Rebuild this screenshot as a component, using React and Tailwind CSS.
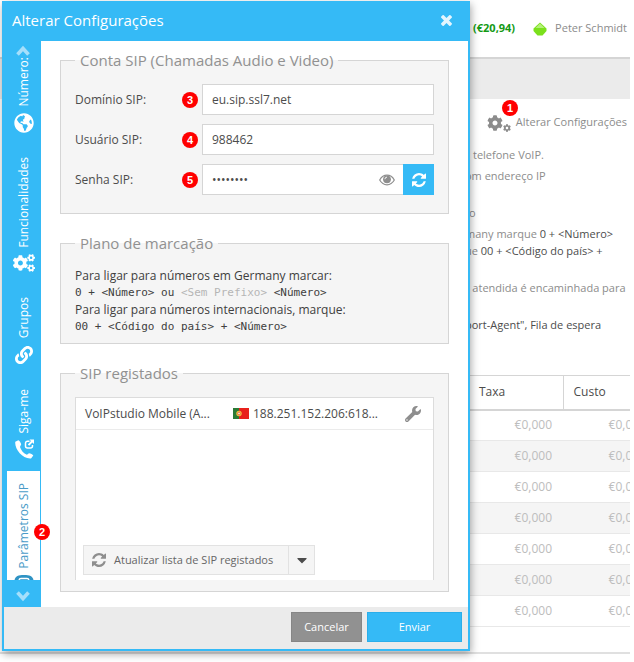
import { FaCogs, FaCog, FaLink, FaWrench, FaGlobeAmericas, FaCaretDown } from 'react-icons/fa';

const RefreshIcon = ({ className }) => (
    <svg viewBox="0 0 1536 1536" fill="currentColor" className={className} aria-hidden="true">
        <path d="M1511 928q0 5-1 7-64 268-268 434.500t-478 166.500q-146 0-282.500-55t-243.500-157l-129 129q-19 19-45 19t-45-19-19-45v-448q0-26 19-45t45-19h448q26 0 45 19t19 45-19 45l-137 137q71 66 161 102t187 36q134 0 250-65t186-179q11-17 53-117 8-23 30-23h192q13 0 22.500 9.500t9.500 22.500zM1536 128v448q0 26-19 45t-45 19h-448q-26 0-45-19t-19-45 19-45l138-138q-148-137-349-137-134 0-250 65t-186 179q-11 17-53 117-8 23-30 23h-199q-13 0-22.500-9.500t-9.500-22.500v-7q65-268 270-434.500t480-166.500q146 0 284 55.500t245 156.500l130-129q19-19 45-19t45 19 19 45z" />
    </svg>
);

const CloseIcon = ({ className }) => (
    <svg viewBox="110 366 1188 1188" fill="currentColor" className={className} aria-hidden="true">
        <path d="M1298 1322q0 40-28 68l-136 136q-28 28-68 28t-68-28l-294-294-294 294q-28 28-68 28t-68-28l-136-136q-28-28-28-68t28-68l294-294-294-294q-28-28-28-68t28-68l136-136q28-28 68-28t68 28l294 294 294-294q28-28 68-28t68 28l136 136q28 28 28 68t-28 68l-294 294 294 294q28 28 28 68z" />
    </svg>
);

const EyeIcon = ({ className }) => (
    <svg viewBox="0 0 16 12" className={className} aria-hidden="true">
        <path d="M0.700 6C2.400 3 5 1.200 8 1.200S13.600 3 15.300 6C13.600 9 11 10.800 8 10.800S2.400 9 0.700 6Z" fill="none" stroke="currentColor" strokeWidth="1.200" />
        <circle cx="8" cy="5.300" r="3.900" fill="currentColor" />
        <path d="M5.900 5.200A2.200 2.200 0 0 1 8 3.100" fill="none" stroke="white" strokeWidth="0.900" />
    </svg>
);

const Chevron = ({ up }) => (
    <svg viewBox="0 0 16 12" className="w-4 h-3" aria-hidden="true">
        <path d={up ? 'M2.500 9.500L8 3.500l5.500 6' : 'M2.500 2.500L8 8.500l5.500-6'} fill="none" stroke="#a5dffb" strokeWidth="3.600" />
    </svg>
);

const ForwardIcon = () => (
    <svg viewBox="0 0 20 20" className="w-5 h-5" aria-hidden="true">
        <path d="M4.300 1.200L1.300 2.800C0.300 9.800 8.500 20.200 17 19.400L19.300 16.600C18.800 15.400 16.500 14.400 15 14.300L12.900 15.800C9.700 14.500 6.900 11 6 7.900L7.200 5.300C6.700 3.600 5.500 1.300 4.300 1.200Z" fill="currentColor" />
        <path d="M15.500 2.200H13.500A2 2 0 0 0 11.500 4.200V7A2 2 0 0 0 13.500 9H16.500A2 2 0 0 0 18.500 7V6" fill="none" stroke="currentColor" strokeWidth="1.500" />
        <path d="M15.500 0.500H20V5L18.400 3.500 15.200 6.800 13.800 5.400 17 2.100Z" fill="currentColor" />
    </svg>
);

const SipIcon = () => (
    <svg viewBox="0 0 20 20" className="w-5 h-5" aria-hidden="true">
        <path d="M0.500 6C0.500 1.500 4 0 10 0S19.500 1.500 19.500 6V13C19.500 18 16 19.500 10 19.500S0.500 18 0.500 13Z" fill="#2f93c4" />
        <rect x="5" y="3.500" width="10" height="13" rx="2" fill="none" stroke="white" strokeWidth="1.300" />
    </svg>
);

const Flag = () => (
    <svg viewBox="0 0 16 11" className="w-4 h-[11px] shrink-0" role="img" aria-label="Portugal">
        <rect width="16" height="11" fill="#e8211c" />
        <rect width="6" height="11" fill="#2c7a35" />
        <circle cx="6" cy="5.500" r="2.700" fill="#f3c53c" />
        <circle cx="6" cy="5.500" r="1.400" fill="#f6e3d8" stroke="#dd4a2a" strokeWidth="0.700" />
    </svg>
);

const Badge = ({ children, className = '' }) => (
    <span className={`flex w-4 h-4 shrink-0 items-center justify-center rounded-full bg-[#ff0000] font-['Liberation_Sans',sans-serif] text-[11px] leading-4 font-bold text-white ${className}`}>
        {children}
    </span>
);

const tabs = [
    { label: 'Número:', icon: <FaGlobeAmericas className="w-5 h-5" /> },
    { label: 'Funcionalidades', icon: <FaCogs className="w-[22px] h-5" /> },
    { label: 'Grupos', icon: <FaLink className="w-5 h-5 p-px" /> },
    { label: 'Siga-me', icon: <ForwardIcon /> },
    { label: 'Parâmetros SIP', icon: <SipIcon />, active: true },
];

const Group = ({ title, children, className = '' }) => (
    <fieldset className={`min-w-0 border border-[#d5d5d5] bg-[#f5f5f5] px-[14px] ${className}`}>
        <legend className="px-[5px] text-[15px] leading-6 text-[#919191]">{title}</legend>
        {children}
    </fieldset>
);

const Field = ({ id, label, step, children }) => (
    <div className="flex h-[31px] items-center">
        <label htmlFor={id} className="w-[107px] shrink-0">{label}</label>
        <Badge className="mr-1">{step}</Badge>
        {children}
    </div>
);

const Tabs = () => (
    <nav className="relative flex w-[37px] shrink-0 flex-col bg-[#35baf6]">
        <button aria-label="Anterior" className="flex h-4 shrink-0 items-end justify-center pl-px">
            <Chevron up />
        </button>
        <div className="flex h-0 grow flex-col overflow-hidden pl-[3px]">
            {tabs.map((tab, i) => (
                <button
                    key={tab.label}
                    className={`flex shrink-0 flex-col items-center gap-[6px] pb-3 text-[12px] leading-5 ${i === 0 ? '' : 'pt-3'} ${
                        tab.active ? 'mr-px bg-white text-[#4a9bc8]' : 'text-white'
                    }`}
                >
                    <span className="rotate-180 [writing-mode:vertical-rl]">{tab.label}</span>
                    {tab.icon}
                </button>
            ))}
        </div>
        <button aria-label="Seguinte" className="flex h-[27px] shrink-0 items-center justify-center pt-1 pl-px">
            <Chevron />
        </button>
        <Badge className="absolute top-[483px] -right-[9px]">2</Badge>
    </nav>
);

const SettingsDialog = () => (
    <div role="dialog" aria-label="Alterar Configurações" className="absolute top-px left-[2px] w-[468px] border-2 border-[#35baf6] bg-white text-[12px] text-[#4c4c4c] shadow-[1px_3px_8px_rgba(0,0,0,0.35)]">
        <header className="flex h-[38px] items-center justify-between bg-[#35baf6] pr-4 pb-1 pl-2">
            <h2 className="text-[15px] leading-6 text-white">Alterar Configurações</h2>
            <button aria-label="Fechar" className="text-[#e3f5fe]">
                <CloseIcon className="w-[11px] h-[11px]" />
            </button>
        </header>
        <div className="flex">
            <Tabs />
            <form className="flex min-w-0 grow flex-col gap-[17px] px-[19px] pt-[7px] pb-[15px]">
                <Group title="Conta SIP (Chamadas Audio e Video)" className="pt-3 pb-[18px]">
                    <div className="flex flex-col gap-[9px]">
                        <Field id="domain" label="Domínio SIP:" step="3">
                            <input id="domain" defaultValue="eu.sip.ssl7.net" className="h-[31px] min-w-0 grow border border-[#d5d5d5] bg-white px-[9px]" />
                        </Field>
                        <Field id="user" label="Usuário SIP:" step="4">
                            <input id="user" defaultValue="988462" className="h-[31px] min-w-0 grow border border-[#d5d5d5] bg-white px-[9px]" />
                        </Field>
                        <Field id="password" label="Senha SIP:" step="5">
                            <div className="flex h-[31px] min-w-0 grow items-center border border-r-0 border-[#d5d5d5] bg-white">
                                <input id="password" type="password" defaultValue="98846201" className="w-0 grow px-[9px]" />
                                <button type="button" aria-label="Mostrar senha" className="mr-2 shrink-0 text-[#8e8e8e]">
                                    <EyeIcon className="w-4 h-3" />
                                </button>
                            </div>
                            <button type="button" aria-label="Gerar senha" className="flex h-[31px] w-[31px] shrink-0 items-center justify-center bg-[#35baf6] text-white">
                                <RefreshIcon className="w-[14px] h-[14px]" />
                            </button>
                        </Field>
                    </div>
                </Group>
                <Group title="Plano de marcação" className="pt-3 pb-2">
                    <div className="leading-[17px] text-[#404040]">
                        <p>Para ligar para números em Germany marcar:</p>
                        <p className="font-['DejaVu_Sans_Mono',monospace] text-[11px]">
                            0 + &lt;Número&gt; ou <span className="text-[#b5b5b5]">&lt;Sem Prefixo&gt;</span> &lt;Número&gt;
                        </p>
                        <p>Para ligar para números internacionais, marque:</p>
                        <p className="font-['DejaVu_Sans_Mono',monospace] text-[11px]">00 + &lt;Código do país&gt; + &lt;Número&gt;</p>
                    </div>
                </Group>
                <Group title="SIP registados" className="pt-3 pb-[11px]">
                    <div className="flex h-[183px] flex-col border border-b-0 border-[#dcdcdc] bg-white">
                        <div className="flex h-8 shrink-0 items-center border-b border-[#ebebeb] pr-3 pl-[9px]">
                            <span className="w-[148px]">VoIPstudio Mobile (A...</span>
                            <Flag />
                            <span className="grow pl-1">188.251.152.206:618...</span>
                            <button type="button" aria-label="Configurar" className="text-[#8e8e8e]">
                                <FaWrench className="w-4 h-4" />
                            </button>
                        </div>
                        <div className="mt-auto mb-[5px] ml-[7px] flex h-[30px] self-start border border-[#e2e2e2] bg-[#f5f5f5] text-[11px] text-[#666666]">
                            <button type="button" className="flex items-center gap-2 pr-[15px] pl-2">
                                <RefreshIcon className="w-[14px] h-[14px] text-[#8e8e8e]" />
                                Atualizar lista de SIP registados
                            </button>
                            <button type="button" aria-label="Mais opções" className="flex w-[26px] items-center justify-center border-l border-[#e2e2e2] text-[#4c4c4c]">
                                <FaCaretDown className="w-4 h-4" />
                            </button>
                        </div>
                    </div>
                </Group>
            </form>
        </div>
        <footer className="flex h-[42px] items-center justify-end gap-[5px] bg-[#ebebeb] pr-[6px] pb-[2px] text-[11px] text-white">
            <button className="h-[30px] w-[71px] border border-[#868686] bg-[#919191]">Cancelar</button>
            <button className="h-[30px] w-[95px] border border-[#2aaeea] bg-[#35baf6]">Enviar</button>
        </footer>
    </div>
);

const Account = () => (
    <main className="mr-1 overflow-hidden border-b-2 border-[#e0e0e0] pb-[25px] text-[11px] text-[#8c8c8c]">
        <div className="flex h-[57px] items-center justify-end pr-[3px] whitespace-nowrap">
            <b className="text-[#149a14]">(€20,94)</b>
            <svg viewBox="0 0 14 14" className="mr-2 ml-[18px] h-[14px] w-[14px]" aria-hidden="true">
                <path d="M7 0.500L13.500 6.500V9L9.500 13.500H4.500L0.500 9V6.500Z" fill="#7be01c" />
                <path d="M7 1.500L11.500 6H2.500Z" fill="#b4f07a" />
            </svg>
            <span>Peter Schmidt</span>
        </div>
        <div className="h-[42px] border-t-2 border-[#d5d5d5] bg-[#ebebeb]" />
        <div className="relative flex h-[47px] items-center justify-end gap-[5px] pr-[3px]">
            <span className="flex items-center text-[#8c8c8c]">
                <FaCog className="h-4 w-4" />
                <FaCog className="mt-[10px] h-2 w-2" />
            </span>
            <a href="#settings">Alterar Configurações</a>
            <Badge className="absolute top-px right-[112px]">1</Badge>
        </div>
        <div className="flex flex-col gap-1 pl-[465px] leading-[17px] whitespace-nowrap">
            <p className="pl-2">telefone VoIP.</p>
            <p>om endereço IP</p>
            <p className="mt-4 pl-1">o</p>
            <p>
                many marque <span className="text-[#4c4c4c]">0 + &lt;Número&gt;</span>
                <br />
                ue <span className="text-[#4c4c4c]">00 + &lt;Código do país&gt; +</span>
            </p>
            <p className="mt-4">r atendida é encaminhada para</p>
            <p className="mt-4 text-[#4c4c4c]">port-Agent", Fila de espera</p>
        </div>
        <table className="mt-[42px] ml-[469px] w-[188px] table-fixed border-collapse text-right text-[12px] text-[#bdbdbd]">
            <thead>
                <tr className="h-[34px] border-t border-b-2 border-[#d5d5d5] text-left text-[#4c4c4c]">
                    <th className="border-r border-[#d5d5d5] pl-[10px] font-normal">Taxa</th>
                    <th className="pl-[10px] font-normal">Custo</th>
                </tr>
            </thead>
            <tbody>
                {[1, 2, 3, 4, 5, 6, 7].map((row) => (
                    <tr key={row} className="h-[31px] border-b border-[#e8e8e8] even:bg-[#f5f5f5]">
                        <td className="pr-[11px]">€0,000</td>
                        <td className="pr-[11px]">€0,000</td>
                    </tr>
                ))}
            </tbody>
        </table>
    </main>
);

const App = () => (
    <div className="relative min-h-screen overflow-hidden bg-white font-['Open_Sans',sans-serif]">
        <Account />
        <SettingsDialog />
    </div>
);

export default App;
